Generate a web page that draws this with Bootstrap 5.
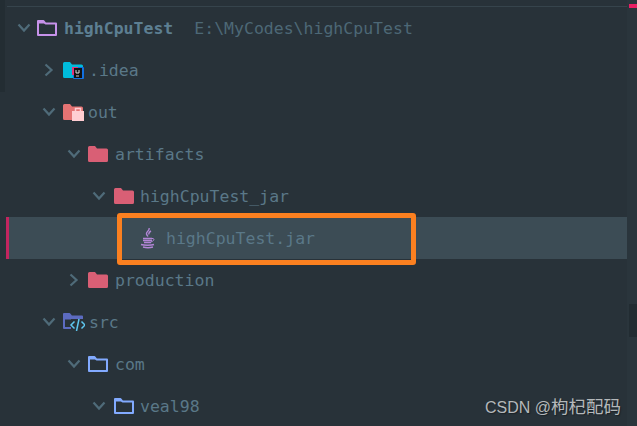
<!DOCTYPE html>
<html lang="en">
<head>
    <meta charset="UTF-8">
    <meta name="viewport" content="width=device-width, initial-scale=1.0">
    <title>Project tree</title>
    <link href="https://cdn.jsdelivr.net/npm/bootstrap@5.3.0/dist/css/bootstrap.min.css" rel="stylesheet">
    <style>
        html, body {
            height: 100%;
            overflow: hidden;
        }
        body {
            background-color: #283239;
            font-family: "DejaVu Sans Mono", monospace;
        }
        .side-gutter {
            width: 6px;
        }
        .side-gutter-top {
            height: 92px;
            width: 5px;
            background-color: #232d33;
        }
        .tree-area {
            width: 621px;
            padding-top: 6px;
        }
        .tree-rule {
            height: 1px;
            margin-left: 1px;
            background-color: #36444c;
        }
        .tree-row {
            height: 42px;
            font-size: 16.5px;
            color: #5a7888;
            white-space: pre;
        }
        .tree-label {
            padding-top: 2px;
        }
        .out-label {
            margin-left: -1px;
        }
        .depth-0 { padding-left: 5px; }
        .depth-1 { padding-left: 30px; }
        .depth-2 { padding-left: 55px; }
        .depth-3 { padding-left: 80px; }
        .depth-4 { padding-left: 105px; }
        .chev {
            width: 26px;
            flex: none;
        }
        .depth-2 .chev, .depth-3 .chev {
            width: 27px;
        }
        .chev-open { padding-left: 6px; }
        .chev-shut { padding-left: 8px; }
        .ico-box {
            width: 27px;
            flex: none;
        }
        .depth-1 .ico-box, .depth-3 .ico-box {
            padding-left: 1px;
        }
        .file-box {
            width: 29px;
            padding-left: 3px;
            flex: none;
        }
        .root-name {
            font-weight: 700;
            color: #5d7f92;
        }
        .root-path {
            margin-left: 21px;
            color: #4d6876;
        }
        .row-selected {
            background-color: #3c4c55;
            border-left: 3px solid #c2255f;
        }
        .row-selected.depth-4 { padding-left: 102px; }
        .orange-box {
            position: absolute;
            left: 108px;
            top: -4px;
            width: 299px;
            height: 52px;
            border: 5px solid #fb8020;
            border-radius: 3px;
        }
        .scroll-strip {
            width: 10px;
            background-color: #2a353c;
        }
        .scroll-mark {
            position: absolute;
            left: 2px;
            top: 4px;
            width: 8px;
            height: 4px;
            background-color: #e91e63;
        }
        .scroll-thumb {
            position: absolute;
            left: 2px;
            top: 304px;
            width: 8px;
            height: 33px;
            background-color: #222c32;
        }
        .watermark {
            position: absolute;
            right: 16px;
            bottom: 7px;
            font-family: "Liberation Sans", "Noto Sans CJK SC", sans-serif;
            font-size: 16px;
            line-height: 22px;
            color: #b4b8ba;
            text-shadow: 1px 1px 1px #1a2126;
            white-space: nowrap;
        }
        .watermark-cjk {
            font-size: 17.5px;
        }
    </style>
</head>
<body>
    <svg width="0" height="0" class="position-absolute">
        <symbol id="chev-down" viewBox="0 0 14 10">
            <path d="M1.5 1.5 7 7.5l5.5-6" fill="none" stroke="#4f6b79" stroke-width="2.2"/>
        </symbol>
        <symbol id="chev-right" viewBox="0 0 10 14">
            <path d="M1.5 1.5 7.5 7l-6 5.5" fill="none" stroke="#4f6b79" stroke-width="2.2"/>
        </symbol>
        <symbol id="folder-solid" viewBox="0 0 20 16">
            <path d="M1.5 0H7l2 2.5h9.5A1.5 1.5 0 0 1 20 4v10.500a1.500 1.500 0 0 1-1.500 1.500h-17A1.500 1.500 0 0 1 0 14.500v-13A1.500 1.500 0 0 1 1.500 0z"/>
        </symbol>
        <symbol id="folder-line" viewBox="0 0 20 16">
            <path d="M1 1h5.500l2 2.500H19V15H1z" fill="none" stroke="currentColor" stroke-width="2" stroke-linejoin="round"/>
            <path d="M1 1h5.500l2 2.500H1z" fill="currentColor"/>
        </symbol>
    </svg>

    <div class="d-flex">
        <div class="side-gutter flex-shrink-0">
            <div class="side-gutter-top"></div>
        </div>

        <div class="tree-area flex-shrink-0">
            <div class="tree-rule"></div>

            <div class="tree-row depth-0 d-flex align-items-center">
                <span class="chev chev-open d-flex"><svg width="14" height="10"><use href="#chev-down"/></svg></span>
                <span class="ico-box d-flex"><svg width="20" height="16" style="color:#c792ea"><use href="#folder-line"/></svg></span>
                <span class="tree-label root-name">highCpuTest</span><span class="tree-label root-path">E:\MyCodes\highCpuTest</span>
            </div>

            <div class="tree-row depth-1 d-flex align-items-center">
                <span class="chev chev-shut d-flex"><svg width="10" height="14"><use href="#chev-right"/></svg></span>
                <span class="ico-box d-flex">
                    <svg width="21" height="17" viewBox="0 0 21 17">
                        <use href="#folder-solid" width="20" height="16" fill="#00bcdc"/>
                        <rect x="10" y="5" width="11" height="12" rx="1" fill="#1270e0"/>
                        <rect x="9" y="5" width="6" height="8" fill="#e0357a"/>
                        <rect x="11" y="6" width="8" height="10" fill="#111"/>
                        <path d="M13 8v3h3V8" fill="none" stroke="#ddd" stroke-width="1"/>
                        <path d="M13 14h3" stroke="#ccc" stroke-width="1"/>
                    </svg>
                </span>
                <span class="tree-label">.idea</span>
            </div>

            <div class="tree-row depth-1 d-flex align-items-center">
                <span class="chev chev-open d-flex"><svg width="14" height="10"><use href="#chev-down"/></svg></span>
                <span class="ico-box d-flex">
                    <svg width="22" height="17" viewBox="0 0 22 17">
                        <use href="#folder-solid" width="20" height="16" fill="#e57373"/>
                        <path d="M9 7h12v10H9z" fill="#ffcdd2"/>
                        <path d="M12.500 7V4.500h5V7" fill="none" stroke="#ffcdd2" stroke-width="1.500"/>
                    </svg>
                </span>
                <span class="tree-label out-label">out</span>
            </div>

            <div class="tree-row depth-2 d-flex align-items-center">
                <span class="chev chev-open d-flex"><svg width="14" height="10"><use href="#chev-down"/></svg></span>
                <span class="ico-box d-flex"><svg width="20" height="16" fill="#d95f75"><use href="#folder-solid"/></svg></span>
                <span class="tree-label">artifacts</span>
            </div>

            <div class="tree-row depth-3 d-flex align-items-center">
                <span class="chev chev-open d-flex"><svg width="14" height="10"><use href="#chev-down"/></svg></span>
                <span class="ico-box d-flex"><svg width="20" height="16" fill="#d95f75"><use href="#folder-solid"/></svg></span>
                <span class="tree-label">highCpuTest_jar</span>
            </div>

            <div class="tree-row row-selected depth-4 d-flex align-items-center position-relative">
                <span class="chev"></span>
                <span class="file-box d-flex">
                    <svg width="16" height="21" viewBox="0 0 16 21" fill="none" stroke="#b285d6">
                        <path d="M9 0c1 2.500-3 3.500-2.500 6 .2 1 1 1.500 1.500 2.500M11 3c-2 1-2.500 2-2 3.500" stroke-width="1.400"/>
                        <path d="M3 10.500h9M3 12.500h9M4 14.500h7" stroke-width="1.300"/>
                        <path d="M12 10.500c2.500-.5 3 2-1 3.500" stroke-width="1"/>
                        <path d="M1 16.500c3 1 10 1 13 0M3 19c3 .8 7 .8 10 0" stroke-width="1.500"/>
                    </svg>
                </span>
                <span class="tree-label">highCpuTest.jar</span>
                <div class="orange-box"></div>
            </div>

            <div class="tree-row depth-2 d-flex align-items-center">
                <span class="chev chev-shut d-flex"><svg width="10" height="14"><use href="#chev-right"/></svg></span>
                <span class="ico-box d-flex"><svg width="20" height="16" fill="#d95f75"><use href="#folder-solid"/></svg></span>
                <span class="tree-label">production</span>
            </div>

            <div class="tree-row depth-1 d-flex align-items-center">
                <span class="chev chev-open d-flex"><svg width="14" height="10"><use href="#chev-down"/></svg></span>
                <span class="ico-box d-flex">
                    <svg width="22" height="18" viewBox="0 0 22 18" fill="none">
                        <use href="#folder-line" width="20" height="16" style="color:#5c6bc0"/>
                        <path d="M1 1h5.500l2 2.500H19v3H1z" fill="#5c6bc0"/>
                        <rect x="8" y="6" width="14" height="11" fill="#283239"/>
                        <path d="M11.500 8.500 8 12l3.500 3.500M18.500 8.500 22 12l-3.500 3.500M16 6l-2.500 12" stroke="#5fc8f0" stroke-width="1.500"/>
                    </svg>
                </span>
                <span class="tree-label">src</span>
            </div>

            <div class="tree-row depth-2 d-flex align-items-center">
                <span class="chev chev-open d-flex"><svg width="14" height="10"><use href="#chev-down"/></svg></span>
                <span class="ico-box d-flex"><svg width="20" height="16" style="color:#82aaff"><use href="#folder-line"/></svg></span>
                <span class="tree-label">com</span>
            </div>

            <div class="tree-row depth-3 d-flex align-items-center">
                <span class="chev chev-open d-flex"><svg width="14" height="10"><use href="#chev-down"/></svg></span>
                <span class="ico-box d-flex"><svg width="20" height="16" style="color:#82aaff"><use href="#folder-line"/></svg></span>
                <span class="tree-label">veal98</span>
            </div>
        </div>

        <div class="scroll-strip flex-shrink-0 vh-100 position-relative">
            <div class="scroll-mark"></div>
            <div class="scroll-thumb"></div>
        </div>
    </div>

    <div class="watermark">CSDN @<span class="watermark-cjk">枸杞配码</span></div>

    <script src="https://cdn.jsdelivr.net/npm/bootstrap@5.3.0/dist/js/bootstrap.bundle.min.js"></script>
</body>
</html>
